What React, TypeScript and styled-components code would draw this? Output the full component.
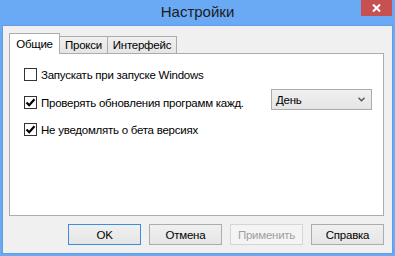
import styled, { createGlobalStyle } from "styled-components";

const GlobalStyle = createGlobalStyle`
  html, body {
    margin: 0;
    padding: 0;
    background: #ffffff;
  }
  body {
    font-family: "Liberation Sans", Arial, sans-serif;
  }
`;

const Window = styled.div`
  width: 395px;
  height: 256px;
  box-sizing: border-box;
  padding: 0 3px 3px 3px;
  background-color: #6aa9f3;
  display: flex;
  flex-direction: column;
`;

const TitleBar = styled.div`
  height: 26px;
  display: grid;
  grid-template-columns: 1fr auto 1fr;
  align-items: start;
`;

const Title = styled.span`
  grid-column: 2;
  font-size: 15px;
  line-height: 24px;
  color: #1c1c1c;
`;

const CloseButton = styled.div`
  grid-column: 3;
  justify-self: end;
  width: 31px;
  height: 16px;
  background-color: #c75050;
  display: flex;
  align-items: center;
  justify-content: center;
`;

const Client = styled.div`
  flex: 1;
  background-color: #f0f0f0;
  box-shadow: 0 0 0 1px #5f9de4;
  padding: 7px 8px 8px 6px;
  display: flex;
  flex-direction: column;
  font-size: 11.5px;
  letter-spacing: -0.25px;
`;

const TabStrip = styled.div`
  height: 20px;
  display: flex;
  align-items: flex-end;
`;

const Tab = styled.div<{ $active?: boolean; $w: number }>`
  position: relative;
  box-sizing: border-box;
  width: ${(p) => p.$w}px;
  height: ${(p) => (p.$active ? 21 : 17)}px;
  margin-left: ${(p) => (p.$active ? 0 : -1)}px;
  margin-bottom: ${(p) => (p.$active ? -1 : 0)}px;
  z-index: ${(p) => (p.$active ? 1 : 0)};
  border: 1px solid #acacac;
  border-bottom: none;
  background: ${(p) =>
    p.$active ? "#ffffff" : "linear-gradient(#f0f0f0, #e5e5e5)"};
  color: #000;
  display: flex;
  align-items: center;
  justify-content: center;
  padding-bottom: ${(p) => (p.$active ? 1 : 0)}px;
`;

const Panel = styled.div`
  height: 163px;
  box-sizing: border-box;
  border: 1px solid #acacac;
  background-color: #ffffff;
  padding: 14px 11px 0 14px;
  display: flex;
  flex-direction: column;
  color: #000;
`;

const Row = styled.div<{ $top: number }>`
  display: flex;
  align-items: flex-start;
  margin-top: ${(p) => p.$top}px;
`;

const CheckLabel = styled.label<{ $offset?: number; $w?: number }>`
  display: flex;
  align-items: center;
  gap: 4px;
  height: 13px;
  margin-top: ${(p) => p.$offset ?? 0}px;
  ${(p) => (p.$w ? `flex: 0 0 ${p.$w}px;` : "")}
  white-space: nowrap;
`;

const Box = styled.span`
  width: 13px;
  height: 13px;
  box-sizing: border-box;
  border: 1px solid #333333;
  background: #ffffff;
  display: flex;
  align-items: center;
  justify-content: center;
  flex: none;
`;

const Combo = styled.div`
  width: 101px;
  height: 21px;
  box-sizing: border-box;
  border: 1px solid #acacac;
  background: linear-gradient(#f0f0f0, #e5e5e5);
  display: flex;
  align-items: center;
  justify-content: space-between;
  padding: 0 6px 0 4px;
`;

const ButtonBar = styled.div`
  margin-top: 8px;
  display: flex;
  justify-content: flex-end;
  gap: 8px;
`;

const Button = styled.div<{ $primary?: boolean; $disabled?: boolean }>`
  width: 73px;
  height: 21px;
  box-sizing: border-box;
  border: 1px solid
    ${(p) => (p.$primary ? "#3c8de0" : p.$disabled ? "#d5d5d5" : "#acacac")};
  background: ${(p) =>
    p.$disabled ? "#f4f4f4" : "linear-gradient(#f0f0f0, #e5e5e5)"};
  color: ${(p) => (p.$disabled ? "#a0a0a0" : "#000")};
  display: flex;
  align-items: center;
  justify-content: center;
`;

function Check({ checked }: { checked?: boolean }) {
  return (
    <Box>
      {checked && (
        <svg width="11" height="11" viewBox="0 0 11 11">
          <path
            d="M1.5 5.5 L4.2 8.2 L9.5 2.2"
            fill="none"
            stroke="#000"
            strokeWidth="2.2"
          />
        </svg>
      )}
    </Box>
  );
}

export default function App() {
  return (
    <>
      <GlobalStyle />
      <Window>
        <TitleBar>
          <Title>Настройки</Title>
          <CloseButton>
            <svg width="9" height="8" viewBox="0 0 9 8">
              <path
                d="M1 0.5 L8 7.5 M8 0.5 L1 7.5"
                stroke="#fff"
                strokeWidth="2"
              />
            </svg>
          </CloseButton>
        </TitleBar>
        <Client>
          <TabStrip>
            <Tab $active $w={51}>
              Общие
            </Tab>
            <Tab $w={49}>Прокси</Tab>
            <Tab $w={70}>Интерфейс</Tab>
          </TabStrip>
          <Panel>
            <Row $top={0}>
              <CheckLabel>
                <Check />
                Запускать при запуске Windows
              </CheckLabel>
            </Row>
            <Row $top={8}>
              <CheckLabel $offset={7} $w={247}>
                <Check checked />
                Проверять обновления программ кажд.
              </CheckLabel>
              <Combo>
                <span>День</span>
                <svg width="7" height="5" viewBox="0 0 7 5">
                  <path
                    d="M0.5 0.8 L3.5 3.8 L6.5 0.8"
                    fill="none"
                    stroke="#555"
                    strokeWidth="1.4"
                  />
                </svg>
              </Combo>
            </Row>
            <Row $top={13}>
              <CheckLabel>
                <Check checked />
                Не уведомлять о бета версиях
              </CheckLabel>
            </Row>
          </Panel>
          <ButtonBar>
            <Button $primary>OK</Button>
            <Button>Отмена</Button>
            <Button $disabled>Применить</Button>
            <Button>Справка</Button>
          </ButtonBar>
        </Client>
      </Window>
    </>
  );
}
